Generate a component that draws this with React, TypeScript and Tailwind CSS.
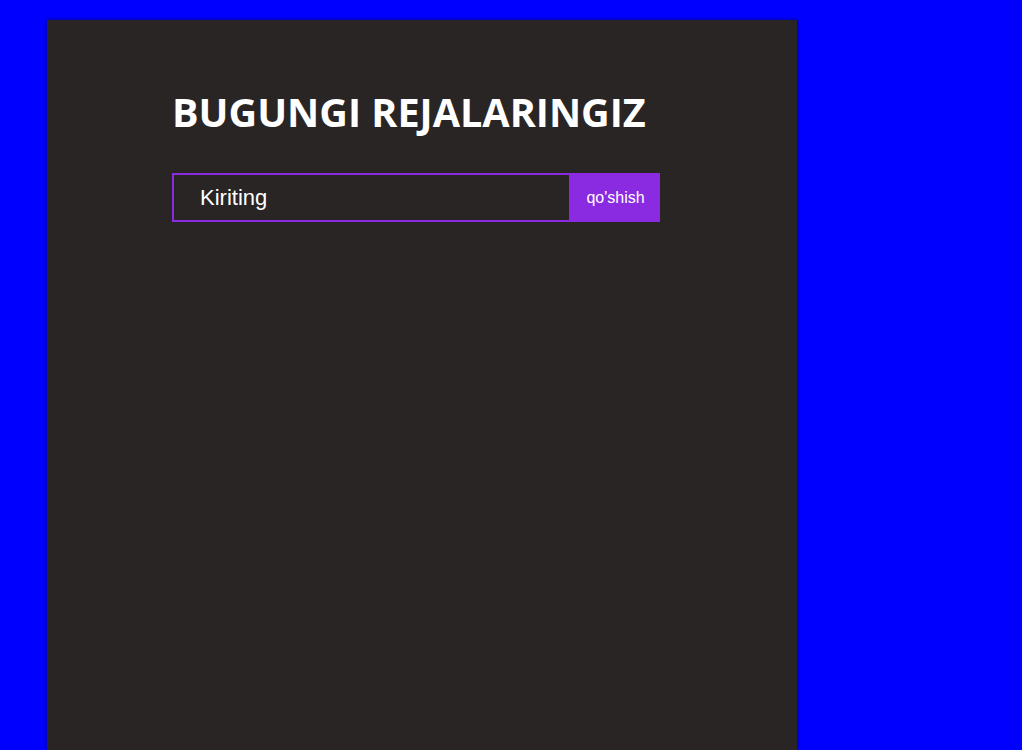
export default function App() {
  return (
    <div className="min-h-screen bg-[#0000ff] pl-[47px] pt-[20px]">
      <div className="w-[750px] min-h-[730px] bg-[#292524] pl-[125px] pt-[66px] shadow-[0_0_4px_rgba(0,0,0,0.5)]">
        <h1 className="text-[39.6px] font-bold leading-[52px] text-white [font-family:'Open_Sans',sans-serif]">
          BUGUNGI REJALARINGIZ
        </h1>
        <div className="mt-[35px] flex h-[49px] w-[488px] [font-family:'Liberation_Sans',Arial,sans-serif]">
          <input
            type="text"
            placeholder="Kiriting"
            className="h-full w-[399px] border-2 border-[#8a2be2] bg-transparent pl-[26px] text-[22px] text-white outline-none placeholder:text-white"
          />
          <button className="h-full flex-1 bg-[#8a2be2] text-[16px] text-white">qo'shish</button>
        </div>
      </div>
    </div>
  )
}
